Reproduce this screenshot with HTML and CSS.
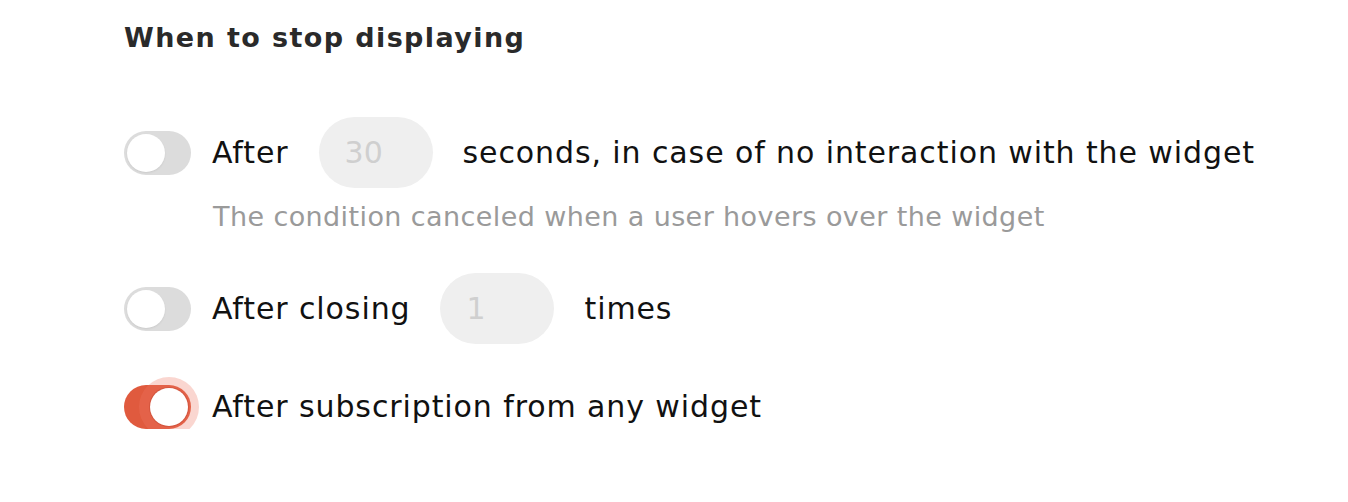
FILE: index.html
```html
<!DOCTYPE html>
<html lang="en">
<head>
<meta charset="utf-8">
<title>When to stop displaying</title>
<link rel="stylesheet" href="styles.css">
</head>
<body>
<section class="panel">
  <h2 class="title">When to stop displaying</h2>
  <div class="row row-first">
    <span class="toggle"><span class="knob"></span></span>
    <span class="label">After</span>
    <span class="field">30</span>
    <span class="label">seconds, in case of no interaction with the widget</span>
  </div>
  <div class="hint">The condition canceled when a user hovers over the widget</div>
  <div class="row row-second">
    <span class="toggle"><span class="knob"></span></span>
    <span class="label">After closing</span>
    <span class="field">1</span>
    <span class="label">times</span>
  </div>
  <div class="row row-third">
    <span class="toggle is-on"><span class="knob"></span></span>
    <span class="label">After subscription from any widget</span>
  </div>
</section>
</body>
</html>
```
FILE: styles.css
```css
* { box-sizing: border-box; }
html, body { margin: 0; padding: 0; background: #ffffff; }
body {
  font-family: "DejaVu Sans", "Noto Sans", sans-serif;
  color: #111111;
}
.panel {
  padding: 18px 0 0 124px;
  display: flex;
  flex-direction: column;
}
.title {
  margin: 0;
  font-size: 27px;
  line-height: 40px;
  font-weight: 700;
  letter-spacing: 1.4px;
  color: #2a2a2a;
}
.row {
  display: flex;
  align-items: center;
  min-height: 44px;
}
.row-first { margin-top: 59px; }
.row-second { margin-top: 40px; }
.row-third { margin-top: 41px; }
.label {
  font-size: 30px;
  line-height: 36px;
  letter-spacing: 0.9px;
  white-space: nowrap;
}
.toggle {
  position: relative;
  flex: 0 0 auto;
  width: 67px;
  height: 44px;
  border-radius: 22px;
  background: #dcdcdc;
  margin-right: 21px;
}
.knob {
  position: absolute;
  top: 3px;
  left: 3px;
  width: 38px;
  height: 38px;
  border-radius: 50%;
  background: #ffffff;
  box-shadow: 0 1px 2px rgba(0,0,0,0.08);
}
.toggle.is-on { background: #e05a3e; }
.toggle.is-on .knob {
  left: 26px;
  box-shadow: 0 0 0 1px rgba(180,60,40,0.35), 0 0 0 11px rgba(240,120,100,0.3);
}
.field {
  flex: 0 0 auto;
  width: 114px;
  height: 71px;
  border-radius: 36px;
  background: #efefef;
  color: #cfcfcf;
  font-size: 30px;
  line-height: 71px;
  padding-left: 26px;
  margin: 0 30px;
}
.hint {
  margin-top: 13px;
  padding-left: 89px;
  font-size: 27px;
  line-height: 32px;
  letter-spacing: 0.4px;
  color: #9a9a9a;
}
```
